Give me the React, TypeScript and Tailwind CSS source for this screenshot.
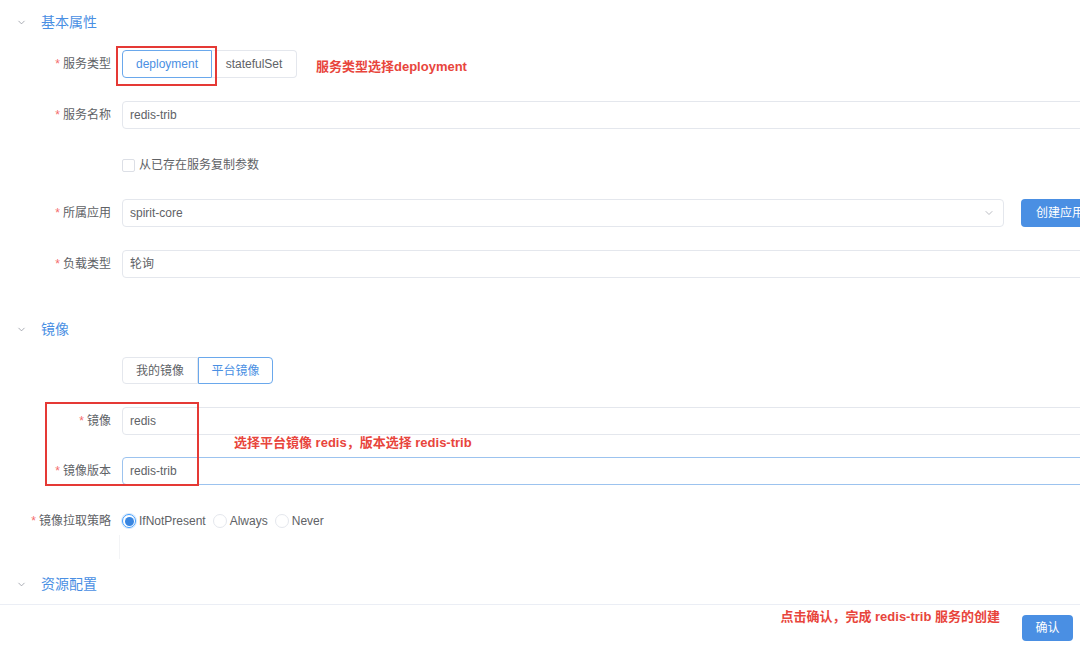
import React from "react";
import { ChevronDown } from "lucide-react";

const Label = ({ text, required = true }: { text: string; required?: boolean }) => (
  <div className="w-[111px] shrink-0 text-right text-[12px] text-[#606266] leading-[28px] whitespace-nowrap">
    {required && <span className="text-[#f56c6c] mr-[3px]">*</span>}
    {text}
  </div>
);

const Input = ({ value, focus = false }: { value: string; focus?: boolean }) => (
  <div
    className={`ml-[11px] w-[1000px] shrink-0 h-[28px] rounded-[4px] border ${
      focus ? "border-[#9cc3ef]" : "border-[#e4e7ed]"
    } bg-white pl-[7px] flex items-center text-[12px] text-[#606266]`}
  >
    {value}
  </div>
);

const SectionHeader = ({ text, className = "" }: { text: string; className?: string }) => (
  <div className={`flex items-center ${className}`}>
    <ChevronDown size={11} strokeWidth={1.6} className="ml-[16px] text-[#8a8f99]" />
    <span className="ml-[14px] text-[14px] text-[#4a8fe3]">{text}</span>
  </div>
);

const Radio = ({ label, checked = false }: { label: string; checked?: boolean }) => (
  <div className="flex items-center mr-[7px]">
    <div
      className={`w-[14px] h-[14px] rounded-full border flex items-center justify-center ${
        checked ? "border-[#409eff] shadow-[0_0_0_1px_#d9e9fb]" : "border-[#e4e7ed]"
      }`}
    >
      {checked && <div className="w-[9px] h-[9px] rounded-full bg-[#3a86e0]" />}
    </div>
    <span className="ml-[3px] text-[12px] text-[#606266]">{label}</span>
  </div>
);

export default function App() {
  return (
    <div className="relative w-[1080px] h-[646px] overflow-hidden bg-white [font-family:'Liberation_Sans','Noto_Sans_CJK_SC',sans-serif]">
      <SectionHeader text="基本属性" className="h-[44px]" />

      {/* 服务类型 */}
      <div className="flex items-center h-[28px] mt-[6px]">
        <Label text="服务类型" />
        <div className="ml-[11px] flex shrink-0">
          <div className="w-[90px] h-[28px] border border-[#6aa8ec] rounded-l-[4px] flex items-center justify-center text-[12px] text-[#4a8fe3]">
            deployment
          </div>
          <div className="w-[85px] h-[28px] border border-l-0 border-[#e4e7ed] rounded-r-[4px] flex items-center justify-center text-[12px] text-[#606266]">
            statefulSet
          </div>
        </div>
        <span className="ml-[19px] mt-[5px] text-[13px] font-bold text-[#e8453c] whitespace-nowrap">服务类型选择deployment</span>
      </div>

      {/* 服务名称 */}
      <div className="flex items-center mt-[23px]">
        <Label text="服务名称" />
        <Input value="redis-trib" />
      </div>

      {/* checkbox */}
      <div className="flex items-center h-[28px] mt-[22px] pl-[122px]">
        <div className="w-[13px] h-[13px] border border-[#dcdfe6] rounded-[2px]" />
        <span className="ml-[4px] text-[12px] text-[#606266]">从已存在服务复制参数</span>
      </div>

      {/* 所属应用 */}
      <div className="flex items-center mt-[20px]">
        <Label text="所属应用" />
        <div className="ml-[11px] w-[882px] shrink-0 h-[28px] rounded-[4px] border border-[#e4e7ed] pl-[7px] pr-[8px] flex items-center justify-between text-[12px] text-[#606266]">
          <span>spirit-core</span>
          <ChevronDown size={12} strokeWidth={1.6} className="text-[#a8abb2]" />
        </div>
        <div className="ml-[17px] w-[80px] shrink-0 h-[28px] rounded-[4px] bg-[#4a8fe3] flex items-center pl-[15px] text-[12px] text-white whitespace-nowrap">
          创建应用
        </div>
      </div>

      {/* 负载类型 */}
      <div className="flex items-center mt-[23px]">
        <Label text="负载类型" />
        <Input value="轮询" />
      </div>

      <SectionHeader text="镜像" className="h-[44px] mt-[29px]" />

      {/* tabs */}
      <div className="flex h-[27px] mt-[6px] pl-[122px]">
        <div className="w-[76px] h-[27px] border border-[#e4e7ed] rounded-l-[4px] flex items-center justify-center text-[12px] text-[#606266]">
          我的镜像
        </div>
        <div className="w-[75px] h-[27px] border border-[#6aa8ec] rounded-r-[4px] flex items-center justify-center text-[12px] text-[#4a8fe3]">
          平台镜像
        </div>
      </div>

      {/* 镜像 */}
      <div className="flex items-center mt-[23px]">
        <Label text="镜像" />
        <Input value="redis" />
      </div>

      {/* 镜像版本 */}
      <div className="flex items-center mt-[22px]">
        <Label text="镜像版本" />
        <Input value="redis-trib" focus />
      </div>

      {/* 镜像拉取策略 */}
      <div className="flex items-center h-[28px] mt-[22px]">
        <Label text="镜像拉取策略" />
        <div className="ml-[11px] flex items-center">
          <Radio label="IfNotPresent" checked />
          <Radio label="Always" />
          <Radio label="Never" />
        </div>
      </div>
      <div className="ml-[119px] w-px h-[24px] bg-[#f3f4f6]" />

      <SectionHeader text="资源配置" className="h-[40px] mt-[6px] border-b border-[#ebeef5]" />

      {/* footer */}
      <div className="flex justify-end pr-[7px]">
        <span className="mt-[4px] text-[13px] leading-[16px] font-bold text-[#e8453c] whitespace-nowrap">
          点击确认，完成 redis-trib 服务的创建
        </span>
        <div className="ml-[22px] mt-[10px] w-[51px] h-[26px] rounded-[4px] bg-[#4a8fe3] flex items-center justify-center text-[12px] text-white">
          确认
        </div>
      </div>

      {/* annotations overlay */}
      <div className="absolute left-[116px] top-[46px] w-[101px] h-[40px] border-2 border-[#e53935]" />
      <div className="absolute left-[45px] top-[402px] w-[154px] h-[84px] border-2 border-[#e53935]" />
      <span className="absolute left-[234px] top-[435px] text-[13px] leading-[16px] font-bold text-[#e8453c] whitespace-nowrap">
        选择平台镜像 redis，版本选择 redis-trib
      </span>
    </div>
  );
}
